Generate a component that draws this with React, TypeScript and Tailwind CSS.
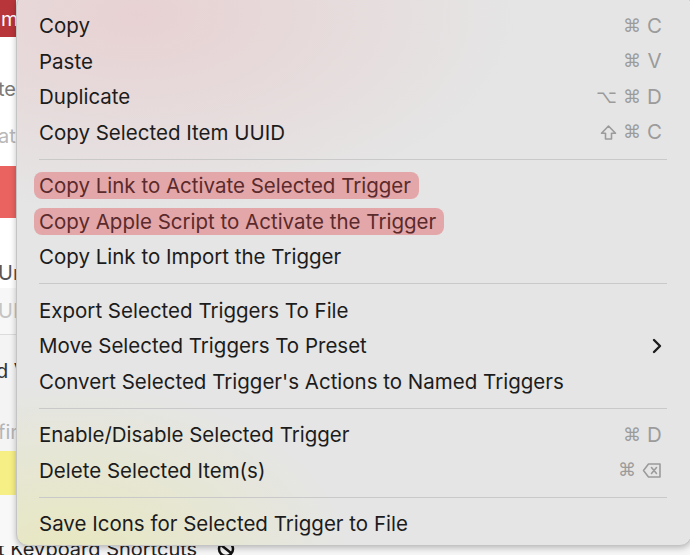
const groups: { label: string; keys?: string[]; sub?: boolean; hl?: boolean }[][] = [
  [
    { label: "Copy", keys: ["⌘", "C"] },
    { label: "Paste", keys: ["⌘", "V"] },
    { label: "Duplicate", keys: ["⌥", "⌘", "D"] },
    { label: "Copy Selected Item UUID", keys: ["⇧", "⌘", "C"] },
  ],
  [
    { label: "Copy Link to Activate Selected Trigger", hl: true },
    { label: "Copy Apple Script to Activate the Trigger", hl: true },
    { label: "Copy Link to Import the Trigger" },
  ],
  [
    { label: "Export Selected Triggers To File" },
    { label: "Move Selected Triggers To Preset", sub: true },
    { label: "Convert Selected Trigger's Actions to Named Triggers" },
  ],
  [
    { label: "Enable/Disable Selected Trigger", keys: ["⌘", "D"] },
    { label: "Delete Selected Item(s)", keys: ["⌘", "⌫"] },
  ],
  [{ label: "Save Icons for Selected Trigger to File" }],
];

const Key = ({ k }: { k: string }) => {
  if (k === "⇧")
    return (
      <svg width="17" height="17" viewBox="0 0 17 17">
        <path d="M8.5 2 L15.5 9.2 H11.5 V15 H5.5 V9.2 H1.5 Z" fill="none" stroke="#9b9b9b" strokeWidth="1.6" strokeLinejoin="round" />
      </svg>
    );
  if (k === "⌫")
    return (
      <svg width="20" height="17" viewBox="0 0 20 17">
        <path d="M6.5 2 H18 V15 H6.5 L1.5 8.5 Z" fill="none" stroke="#9b9b9b" strokeWidth="1.6" strokeLinejoin="round" />
        <path d="M9.5 5.5 L14.5 11.5 M14.5 5.5 L9.5 11.5" stroke="#9b9b9b" strokeWidth="1.6" strokeLinecap="round" />
      </svg>
    );
  const sym = "⌘⌥".includes(k);
  return (
    <span
      className={
        sym
          ? "font-['DejaVu_Sans',sans-serif] text-[18px] leading-none"
          : "w-[15px] text-center font-['Inter',sans-serif] text-[20.5px] leading-none"
      }
    >
      {k}
    </span>
  );
};

const Background = () => (
  <div className="flex w-[16px] flex-col overflow-hidden whitespace-nowrap bg-white font-['Inter',sans-serif] text-[20px] leading-none">
    <div className="flex h-[37px] items-center bg-[#b8353a] pl-[1px] text-white">m</div>
    <div className="h-[34px]" />
    <div className="-ml-[2px] flex h-[35px] items-center text-[#7a7a7a]">te</div>
    <div className="-ml-[2px] flex h-[60px] items-center text-[#b8b8b8]">at</div>
    <div className="h-[52px] bg-[#ea6360]" />
    <div className="h-[40px]" />
    <div className="-ml-[2px] flex h-[30px] items-center text-[#555]">Ur</div>
    <div className="-ml-[2px] flex h-[46px] items-center bg-[#f7f7f7] text-[#c4c4c4]">UI</div>
    <div className="h-[1px] bg-[#dcdcdc]" />
    <div className="-ml-[4px] flex h-[78px] items-center bg-[#f4f4f4] pb-[6px] text-[#333]">d V</div>
    <div className="-ml-[2px] flex h-[38px] items-center bg-[#f4f4f4] text-[#b4b4b4]">fin</div>
    <div className="h-[44px] bg-[#f6ef86]" />
    <div className="h-[60px] bg-[#f8f8f8]" />
  </div>
);

export default function App() {
  return (
    <div className="relative flex h-[555px] w-[690px] overflow-hidden bg-[#f6f6f6]">
      <Background />
      <div className="flex-1" />
      <div className="absolute bottom-0 left-0 flex h-[9px] w-[300px] items-start overflow-hidden font-['Inter',sans-serif] text-[20px] leading-[20px] text-[#222]">
        <span className="-mt-[7px] -ml-[2px] whitespace-nowrap">t Keyboard Shortcuts</span>
        <svg width="22" height="20" viewBox="0 0 22 20" className="-mt-[7px] ml-[18px] shrink-0">
          <circle cx="11" cy="10" r="7" fill="none" stroke="#111" strokeWidth="2.5" />
          <path d="M6 6 L16 14" stroke="#111" strokeWidth="2.5" />
        </svg>
      </div>
      <div className="absolute left-[16px] top-[-6px] h-[552px] w-[676px] overflow-hidden rounded-[12px] border border-[#c4c4c4] bg-[#e5e5e5] bg-[radial-gradient(ellipse_380px_200px_at_120px_20px,rgba(234,196,198,0.6),transparent),radial-gradient(ellipse_280px_170px_at_50px_560px,rgba(232,232,188,0.9),transparent)] shadow-[0_2px_6px_rgba(0,0,0,0.25)]">
        <div className="flex flex-col pl-[22px] pr-[24px] pt-[13px] font-['Inter',sans-serif] text-[20.5px] text-[#1c1c1c]">
          {groups.map((g, gi) => (
            <div key={gi} className="flex flex-col">
              {gi > 0 && <div className="my-[8.5px] h-[1px] bg-[#c9c9c9]" />}
              {g.map((it, i) => (
                <div key={i} className="flex h-[35.5px] items-center whitespace-nowrap">
                  <span
                    className={
                      it.hl
                        ? "-ml-[5px] rounded-[8px] bg-[#e3a7a9] py-[2px] pl-[5px] pr-[8px] leading-[23px] text-[#5b2a2c]"
                        : "leading-[23px]"
                    }
                  >
                    {it.label}
                  </span>
                  <div className="flex-1" />
                  {it.keys && (
                    <span className="mr-[5px] flex items-center gap-[6px] text-[#9b9b9b]">
                      {it.keys.map((k, ki) => (
                        <Key key={ki} k={k} />
                      ))}
                    </span>
                  )}
                  {it.sub && (
                    <svg width="12" height="18" viewBox="0 0 12 18" className="mr-[4px]">
                      <path d="M3 3 L9 9 L3 15" fill="none" stroke="#1c1c1c" strokeWidth="2.4" strokeLinecap="round" strokeLinejoin="round" />
                    </svg>
                  )}
                </div>
              ))}
            </div>
          ))}
        </div>
      </div>
    </div>
  );
}
